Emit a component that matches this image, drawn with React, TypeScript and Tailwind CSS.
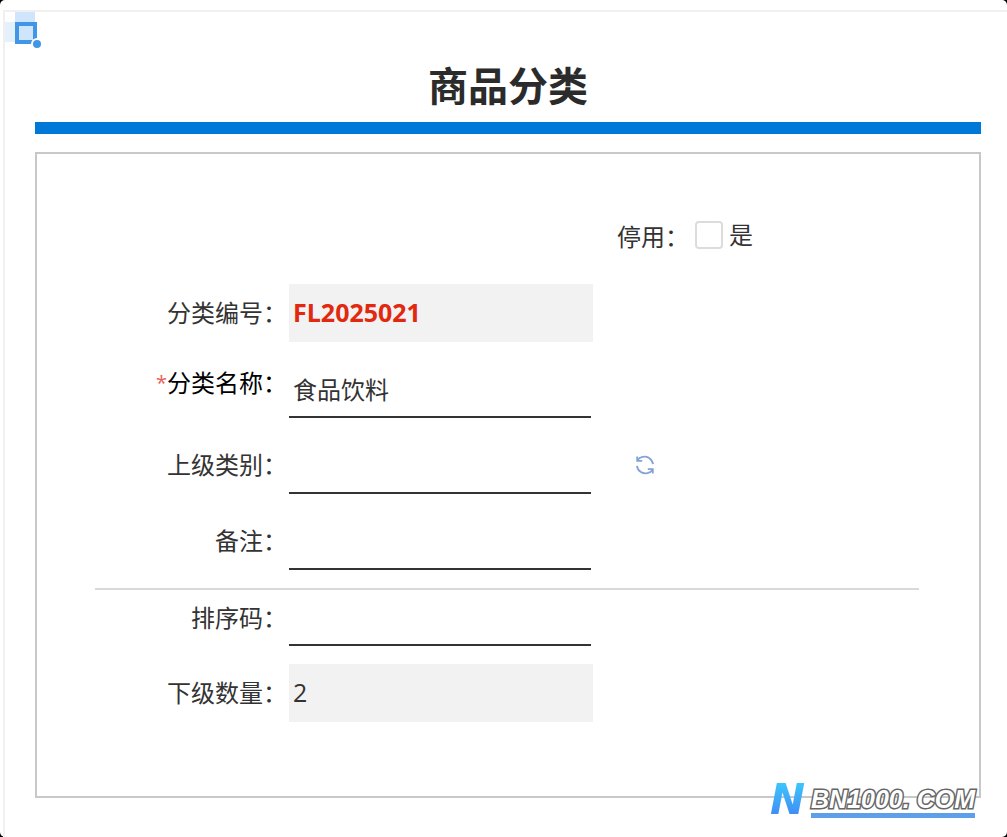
import { useState } from 'react';
import type { ReactNode } from 'react';

const ROW = 'grid min-h-[58px] grid-cols-[192fr_304fr_324fr] gap-x-0.5';
const LINE_INPUT =
  'w-full max-w-[calc(100%-2px)] border-b-2 border-[#333] bg-transparent px-1 text-[#333] outline-none';
const READONLY_INPUT = 'w-full bg-[#f2f2f2] px-1 text-[25px] outline-none';

type FieldProps = {
  id: string;
  label: string;
  required?: boolean;
  divider?: boolean;
  aside?: ReactNode;
  children: ReactNode;
};

function Field({ id, label, required, divider, aside, children }: FieldProps) {
  return (
    <div className={`${ROW} ${divider ? 'border-t-2 border-[#d9d9d9]' : ''}`}>
      <label
        htmlFor={id}
        className={`flex items-center justify-end whitespace-nowrap ${required ? 'pb-3 text-black' : ''}`}
      >
        {required && <span className="text-xl text-[#e8605a]">*</span>}
        {label}：
      </label>
      {children}
      <div className="flex items-center pl-10">{aside}</div>
    </div>
  );
}

function RefreshIcon() {
  return (
    <svg width="20" height="20" viewBox="0 0 20 20" fill="none" stroke="#83a3d6" strokeWidth="1.8">
      <path d="M2.4 5.2C4.8 1.600 10 .6 14 2.900c2.300 1.400 3.700 3.700 4 6.300" />
      <path d="M2.200 1.600v4.200h5" />
      <path d="M17.600 14.800c-2.400 3.600-7.600 4.600-11.600 2.300-2.300-1.400-3.700-3.700-4-6.300" />
      <path d="M17.800 18.400v-4.200h-5" />
    </svg>
  );
}

function CornerMark() {
  return (
    <svg className="absolute top-0 left-0" width="38" height="38" viewBox="0 0 38 38">
      <rect x="10" y="0" width="20" height="10" fill="#cfe5fb" />
      <rect x="0" y="10" width="10" height="20" fill="#e4f0fc" />
      <rect x="12" y="12" width="18" height="18" fill="#cfe5fb" stroke="#4296e6" strokeWidth="4" />
      <circle cx="32" cy="32" r="6" fill="#fff" />
      <circle cx="32" cy="32" r="4" fill="#4296e6" />
    </svg>
  );
}

function Watermark() {
  return (
    <div className="absolute right-1 -bottom-[22px] flex h-9 items-end gap-0.5 font-bold italic">
      <span className="bg-gradient-to-b from-[#3cc8fb] to-[#4285f4] bg-clip-text px-1 font-['DejaVu_Sans',sans-serif] text-[42px] leading-9 text-transparent">
        N
      </span>
      <span className="border-b-[5px] border-[#5f9ee8] font-['Liberation_Sans',sans-serif] text-[25px] leading-7 whitespace-nowrap text-white [-webkit-text-stroke:3px_#666] [paint-order:stroke_fill]">
        BN1000. COM
      </span>
    </div>
  );
}

export default function App() {
  const [disabled, setDisabled] = useState(false);
  const [name, setName] = useState('食品饮料');
  const [parent, setParent] = useState('');
  const [remark, setRemark] = useState('');
  const [sort, setSort] = useState('');

  return (
    <div className="bg-black">
      <div className="flex min-h-screen rounded-[5px] bg-white pt-2.5 pl-[3px] font-['Open_Sans','Noto_Sans_CJK_SC',sans-serif] text-2xl text-[#333]">
        <main className="relative flex-1 border-t-2 border-l-2 border-[#f0f0f0] pt-11 pr-[26px] pb-9 pl-[30px]">
          <CornerMark />
          <h1 className="border-b-[12px] border-[#0078d7] pb-1.5 text-center text-[40px] leading-[60px] font-bold text-[#2b2b2b]">
            商品分类
          </h1>

          <form
            className="relative mt-[18px] flex flex-col gap-[18px] border-2 border-[#c8c8c8] pt-[54px] pr-[60px] pb-[74px] pl-[58px]"
            onSubmit={e => e.preventDefault()}
          >
            <div className={ROW}>
              <div className="col-start-3 flex items-center pl-[22px] whitespace-nowrap">
                <span>停用：</span>
                <label className="ml-1.5 flex items-center gap-1.5 pb-1">
                  <input
                    type="checkbox"
                    checked={disabled}
                    onChange={e => setDisabled(e.target.checked)}
                    className="size-7 shrink-0 appearance-none rounded-sm border-2 border-[#dcdcdc] bg-white checked:bg-[#0078d7]"
                  />
                  是
                </label>
              </div>
            </div>

            <Field id="code" label="分类编号">
              <input id="code" readOnly value="FL2025021" className={`${READONLY_INPUT} font-bold text-[#e0290f]`} />
            </Field>
            <Field id="name" label="分类名称" required>
              <input id="name" value={name} onChange={e => setName(e.target.value)} className={`${LINE_INPUT} pt-1`} />
            </Field>
            <Field
              id="parent"
              label="上级类别"
              aside={
                <button type="button" aria-label="刷新" onClick={() => setParent('')}>
                  <RefreshIcon />
                </button>
              }
            >
              <input id="parent" value={parent} onChange={e => setParent(e.target.value)} className={LINE_INPUT} />
            </Field>
            <Field id="remark" label="备注">
              <input id="remark" value={remark} onChange={e => setRemark(e.target.value)} className={LINE_INPUT} />
            </Field>
            <Field id="sort" label="排序码" divider>
              <input id="sort" value={sort} onChange={e => setSort(e.target.value)} className={LINE_INPUT} />
            </Field>
            <Field id="children" label="下级数量">
              <input id="children" readOnly value="2" className={READONLY_INPUT} />
            </Field>

            <Watermark />
          </form>
        </main>
      </div>
    </div>
  );
}
